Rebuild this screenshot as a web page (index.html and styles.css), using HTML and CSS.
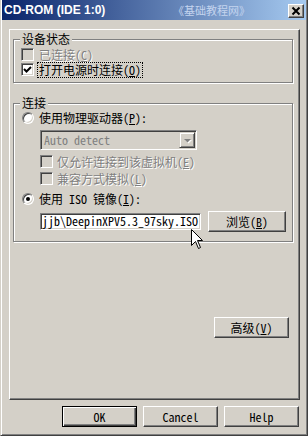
FILE: index.html
```html
<!DOCTYPE html>
<html lang="zh-CN">
<head>
    <meta charset="UTF-8">
    <title>CD-ROM (IDE 1:0)</title>
    <link rel="stylesheet" href="styles.css">
</head>
<body>
    <div class="window">
        <div class="titlebar">
            <span class="title">CD-ROM (IDE 1:0)</span>
            <span class="mark">《基础教程网》</span>
            <button class="close">
                <svg width="14" height="12" viewBox="0 0 14 12"><path d="M3.5 2.5 L10.5 9.5 M10.5 2.5 L3.5 9.5" stroke="#000" stroke-width="2"/></svg>
            </button>
        </div>

        <div class="panel">
            <fieldset class="group g1">
                <legend>设备状态</legend>
                <div class="row">
                    <span class="check disabled"></span>
                    <span class="lbl disabled">已连接(<u>C</u>)</span>
                </div>
                <div class="row">
                    <span class="check">
                        <svg width="9" height="9" viewBox="0 0 9 9"><path d="M1 4 L3.5 6.5 L8 2" fill="none" stroke="#000" stroke-width="2"/></svg>
                    </span>
                    <span class="lbl focus">打开电源时连接(<u>O</u>)</span>
                </div>
            </fieldset>

            <fieldset class="group g2">
                <legend>连接</legend>
                <div class="row radio-row">
                    <span class="radio"></span>
                    <span class="lbl">使用物理驱动器(<u>P</u>):</span>
                </div>
                <div class="combo">
                    <span class="combo-text">Auto detect</span>
                    <span class="combo-btn">
                        <svg width="14" height="14" viewBox="0 0 14 14">
                            <polygon points="4,6 11,6 7.5,9.5" fill="#fff" transform="translate(1,1)"/>
                            <polygon points="4,6 11,6 7.5,9.5" fill="#808080"/>
                        </svg>
                    </span>
                </div>
                <div class="row sub first">
                    <span class="check disabled"></span>
                    <span class="lbl disabled">仅允许连接到该虚拟机(<u>E</u>)</span>
                </div>
                <div class="row sub">
                    <span class="check disabled"></span>
                    <span class="lbl disabled">兼容方式模拟(<u>L</u>)</span>
                </div>
                <div class="row radio-row r2">
                    <span class="radio on"></span>
                    <span class="lbl">使用 ISO 镜像(<u>I</u>):</span>
                </div>
                <div class="iso-row">
                    <div class="edit">jjb\DeepinXPV5.3_97sky.ISO</div>
                    <button class="btn browse">浏览(<u>B</u>)</button>
                </div>
            </fieldset>

            <button class="btn advanced">高级(<u>V</u>)</button>
        </div>

        <div class="footer">
            <button class="btn default">OK</button>
            <button class="btn">Cancel</button>
            <button class="btn">Help</button>
        </div>

        <svg class="cursor" width="13" height="21" viewBox="0 0 13 21">
            <polygon points="0.5,0.5 0.5,16.5 4.5,12.5 7.5,19.5 9.5,18.5 6.5,11.5 11.5,11.5" fill="#fff" stroke="#000" stroke-width="1"/>
        </svg>
    </div>
</body>
</html>
```

FILE: styles.css
```css
body {
    margin: 0;
    background: #d4d0c8;
    font-family: "Noto Sans Mono CJK SC", "Noto Sans CJK SC", monospace;
    font-size: 12px;
    color: #000;
}

.window {
    position: relative;
    width: 308px;
    height: 436px;
    box-sizing: border-box;
    background: #d4d0c8;
    border-left: 1px solid #d4d0c8;
    border-right: 1px solid #404040;
    border-bottom: 1px solid #404040;
    box-shadow: inset 1px 0 #fff, inset -1px -1px #808080;
}

/* title bar */
.titlebar {
    display: flex;
    align-items: center;
    height: 20px;
    margin: 0 1px;
    background: linear-gradient(to right, #0a246a, #a6caf0);
}
.title {
    width: 169px;
    padding-left: 2px;
    font-family: "Liberation Sans", sans-serif;
    font-weight: bold;
    font-size: 12px;
    color: #fff;
    white-space: nowrap;
}
.mark {
    font-family: "Noto Sans CJK SC", sans-serif;
    font-size: 11px;
    line-height: 14px;
    color: #c4d4ee;
}
.close {
    margin: 2px 2px 0 auto;
    width: 16px;
    height: 14px;
    padding: 0;
    box-sizing: border-box;
    background: #d4d0c8;
    border: 1px solid;
    border-color: #fff #404040 #404040 #fff;
    box-shadow: inset -1px -1px #808080;
    display: flex;
}

/* tab page */
.panel {
    width: 291px;
    height: 371px;
    margin: 9px 0 0 8px;
    box-sizing: border-box;
    border: 1px solid;
    border-color: #fff #404040 #404040 #fff;
    box-shadow: inset -1px -1px #808080;
    overflow: hidden;
}

.group {
    width: 280px;
    box-sizing: border-box;
    margin: 0 0 0 3px;
    padding: 0;
    min-width: 0;
    border: 1px solid #808080;
    box-shadow: inset 1px 1px #fff, 1px 1px #fff;
}
.group legend {
    margin-left: 6px;
    padding: 0 2px;
    line-height: 14px;
    background: #d4d0c8;
}
.g1 {
    margin-top: 2px;
    padding: 1px 0 5px 0;
}
.g2 {
    margin-top: 13px;
    padding: 0 0 9px 0;
}

.row {
    display: flex;
    align-items: center;
    height: 15px;
    white-space: nowrap;
}
.g1 .row {
    padding-left: 7px;
}
.radio-row {
    padding-left: 8px;
}
.sub {
    padding-left: 26px;
    margin-top: 2px;
}
.sub.first {
    margin-top: 4px;
}
.sub .lbl {
    margin-left: 2px;
}
.r2 {
    margin-top: 5px;
}

.lbl {
    margin-left: 3px;
    padding: 0 1px;
    border: 1px solid transparent;
    line-height: 12px;
}
.lbl.focus {
    padding: 1px;
    border: 1px dotted #000;
}
.lbl.disabled {
    color: #808080;
    text-shadow: 1px 1px #fff;
}

/* checkbox / radio */
.check {
    width: 13px;
    height: 13px;
    box-sizing: border-box;
    flex: none;
    display: flex;
    align-items: center;
    justify-content: center;
    background: #fff;
    border: 1px solid;
    border-color: #808080 #fff #fff #808080;
    box-shadow: inset 1px 1px #404040, inset -1px -1px #d4d0c8;
}
.check.disabled {
    background: #d4d0c8;
}
.radio {
    position: relative;
    width: 12px;
    height: 12px;
    box-sizing: border-box;
    flex: none;
    border-radius: 50%;
    background: #fff;
    border: 1px solid;
    border-color: #808080 #fff #fff #808080;
    box-shadow: inset 1px 1px #404040, inset -1px -1px #d4d0c8;
}
.radio.on::after {
    content: "";
    position: absolute;
    left: 3px;
    top: 3px;
    width: 4px;
    height: 4px;
    border-radius: 50%;
    background: #000;
}

/* combo box */
.combo {
    display: flex;
    align-items: center;
    width: 157px;
    height: 20px;
    margin: 5px 0 0 26px;
    box-sizing: border-box;
    padding: 1px;
    background: #d4d0c8;
    border: 1px solid;
    border-color: #808080 #fff #fff #808080;
    box-shadow: inset 1px 1px #404040, inset -1px -1px #d4d0c8;
}
.combo-text {
    flex: 1;
    padding-left: 2px;
    color: #808080;
    line-height: 14px;
}
.combo-btn {
    width: 16px;
    height: 16px;
    box-sizing: border-box;
    border: 1px solid;
    border-color: #d4d0c8 #404040 #404040 #d4d0c8;
    box-shadow: inset 1px 1px #fff, inset -1px -1px #808080;
    display: flex;
}

/* iso path */
.iso-row {
    display: flex;
    align-items: center;
    height: 21px;
    margin-top: 5px;
    padding-left: 26px;
}
.edit {
    width: 161px;
    height: 17px;
    box-sizing: border-box;
    background: #fff;
    border: 1px solid;
    border-color: #808080 #fff #fff #808080;
    box-shadow: inset 1px 1px #404040, inset -1px -1px #d4d0c8;
    line-height: 14px;
    white-space: nowrap;
    overflow: hidden;
    text-indent: 1px;
}

/* buttons */
.btn {
    width: 75px;
    height: 21px;
    box-sizing: border-box;
    padding: 0;
    background: #d4d0c8;
    border: 1px solid;
    border-color: #fff #404040 #404040 #fff;
    box-shadow: inset -1px -1px #808080;
    font-family: inherit;
    font-size: 12px;
    line-height: 18px;
    color: #000;
}
.btn.default {
    border-color: #000;
    box-shadow: inset 1px 1px #fff, inset -1px -1px #404040, inset -2px -2px #808080;
}
.browse {
    width: 78px;
    margin-left: 7px;
}
.advanced {
    display: block;
    margin: 75px 0 0 204px;
}

.footer {
    display: flex;
    gap: 6px;
    margin-top: 6px;
    padding-left: 61px;
}

.cursor {
    position: absolute;
    left: 190px;
    top: 229px;
}
```
